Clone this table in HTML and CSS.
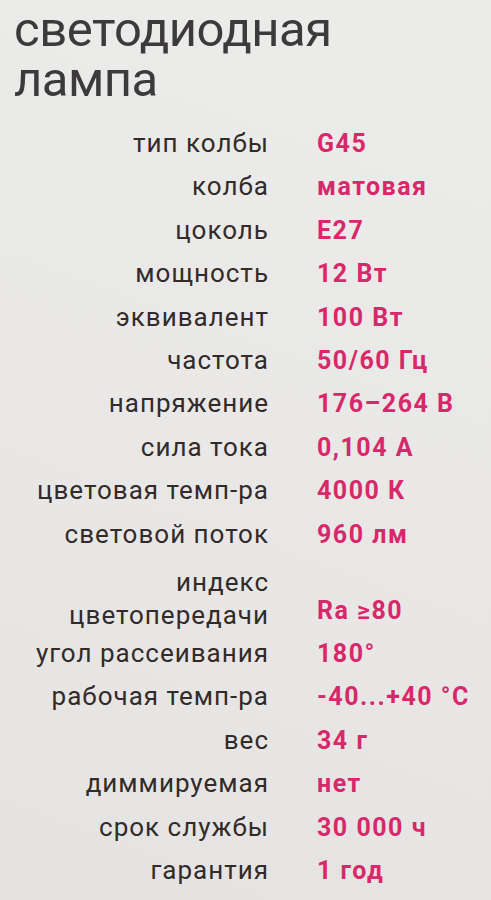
FILE: index.html
```html
<!DOCTYPE html>
<html lang="ru">
<head>
<meta charset="utf-8">
<link rel="stylesheet" href="styles.css">
</head>
<body>
<div class="box">
  <h1 class="title">светодиодная<br>лампа</h1>
  <div class="specs">
    <div class="label">тип колбы</div><div class="value">G45</div>
    <div class="label">колба</div><div class="value">матовая</div>
    <div class="label">цоколь</div><div class="value">E27</div>
    <div class="label">мощность</div><div class="value">12 Вт</div>
    <div class="label">эквивалент</div><div class="value">100 Вт</div>
    <div class="label">частота</div><div class="value">50/60 Гц</div>
    <div class="label">напряжение</div><div class="value">176–264 В</div>
    <div class="label">сила тока</div><div class="value">0,104 А</div>
    <div class="label">цветовая темп-ра</div><div class="value">4000 К</div>
    <div class="label">световой поток</div><div class="value">960 лм</div>
    <div class="label two">индекс<br>цветопередачи</div><div class="value">Ra ≥80</div>
    <div class="label">угол рассеивания</div><div class="value">180°</div>
    <div class="label">рабочая темп-ра</div><div class="value">-40...+40 °C</div>
    <div class="label">вес</div><div class="value">34 г</div>
    <div class="label">диммируемая</div><div class="value">нет</div>
    <div class="label">срок службы</div><div class="value">30 000 ч</div>
    <div class="label">гарантия</div><div class="value">1 год</div>
  </div>
</div>
</body>
</html>
```

FILE: styles.css
```css
html, body {
  margin: 0;
  padding: 0;
}
body {
  width: 491px;
  height: 900px;
  overflow: hidden;
  background: linear-gradient(20deg, #e5e3e2 0%, #e9e8e7 50%, #ececeb 100%);
  font-family: Roboto, "Noto Sans", sans-serif;
}
.box {
  padding: 5px 0 0 14px;
}
.title {
  margin: 0;
  font-size: 49px;
  line-height: 50px;
  font-weight: 400;
  color: #3d3a3b;
  letter-spacing: -0.5px;
}
.specs {
  margin-top: 17px;
  display: grid;
  grid-template-columns: 255px auto;
  column-gap: 48px;
  align-items: end;
}
.label {
  text-align: right;
  font-size: 26px;
  line-height: 43.4px;
  letter-spacing: 1px;
  color: #322b29;
  white-space: nowrap;
}
.label.two {
  line-height: 33px;
  padding-top: 10px;
}
.value {
  font-size: 25px;
  line-height: 43.4px;
  font-weight: 700;
  letter-spacing: 1.5px;
  color: #d8286a;
  white-space: nowrap;
}
```
